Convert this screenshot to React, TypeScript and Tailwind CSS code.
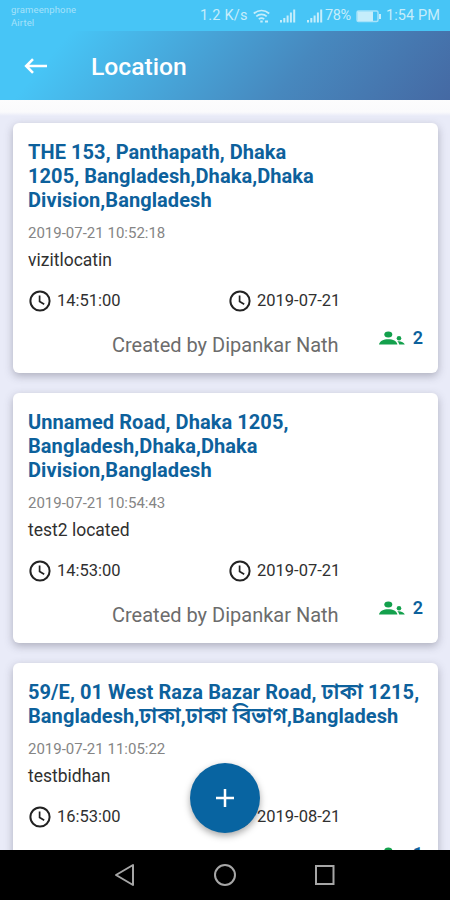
interface Place {
  id: number;
  address: string;
  createdAt: string;
  note: string;
  time: string;
  date: string;
  createdBy: string;
  members: number;
}

const PLACES: Place[] = [
  {
    id: 1,
    address: "THE 153, Panthapath, Dhaka\n1205, Bangladesh,Dhaka,Dhaka\nDivision,Bangladesh",
    createdAt: "2019-07-21 10:52:18",
    note: "vizitlocatin",
    time: "14:51:00",
    date: "2019-07-21",
    createdBy: "Dipankar Nath",
    members: 2,
  },
  {
    id: 2,
    address: "Unnamed Road, Dhaka 1205,\nBangladesh,Dhaka,Dhaka\nDivision,Bangladesh",
    createdAt: "2019-07-21 10:54:43",
    note: "test2 located",
    time: "14:53:00",
    date: "2019-07-21",
    createdBy: "Dipankar Nath",
    members: 2,
  },
  {
    id: 3,
    address: "59/E, 01 West Raza Bazar Road, ঢাকা 1215,\nBangladesh,ঢাকা,ঢাকা বিভাগ,Bangladesh",
    createdAt: "2019-07-21 11:05:22",
    note: "testbidhan",
    time: "16:53:00",
    date: "2019-08-21",
    createdBy: "Dipankar Nath",
    members: 1,
  },
];

function ClockIcon() {
  return (
    <svg viewBox="0 0 22 22" className="h-[22px] w-[22px] shrink-0" fill="none" stroke="#222" strokeWidth="2">
      <circle cx="11" cy="11" r="9.6" />
      <path d="M10.6 5.5v6l4.6 2.8" strokeWidth="1.7" />
    </svg>
  );
}

function PeopleIcon() {
  return (
    <svg viewBox="0 0 26 14" className="h-[14px] w-[26px]" fill="#13a04c">
      <ellipse cx="9.3" cy="3.4" rx="4" ry="3" />
      <path d="M0 13.5c.6-3.4 4.6-5.2 9.3-5.2s8.5 1.8 9.1 5.2z" />
      <circle cx="20" cy="7.2" r="2.3" />
      <path d="M18.4 10.2c3.4-.4 6.6.9 7.4 3.3h-5.6c-.2-1.3-.8-2.3-1.8-3.3z" />
    </svg>
  );
}

function SignalIcon() {
  return (
    <svg viewBox="0 0 16 14" className="h-[14px] w-4" fill="#c5edfb">
      <rect x="0" y="11" width="2" height="2.5" />
      <rect x="3.3" y="9" width="2" height="4.5" />
      <rect x="6.6" y="6.5" width="2" height="7" />
      <rect x="9.9" y="3.5" width="2" height="10" />
      <rect x="13.2" y="0.5" width="2" height="13" />
    </svg>
  );
}

function StatusBar() {
  return (
    <div className="flex h-[31px] bg-[#47c5f6] text-[#c5edfb]">
      <div className="w-[200px] pt-[3px] pl-[11px] text-[9.5px] leading-[13px] tracking-[0.15px] text-[#a5e2fa]">
        <div>grameenphone</div>
        <div>Airtel</div>
      </div>
      <div className="flex h-8 flex-1 items-center text-[14.5px] whitespace-nowrap">
        <span className="w-[53px] tracking-[0.2px]">1.2 K/s</span>
        <svg viewBox="0 0 17 14" className="mr-[10px] h-[14px] w-[17px]" fill="none" stroke="#c5edfb" strokeWidth="1.7">
          <path d="M.8 4.5c4.5-4 10.9-4 15.4 0M3.3 7.4c3-2.7 7.4-2.7 10.4 0M5.8 10.2c1.6-1.4 3.8-1.4 5.4 0" />
          <path d="M7.3 12.6h2.4M12 12.5h3" strokeWidth="2" />
        </svg>
        <SignalIcon />
        <span className="w-[11px]" />
        <SignalIcon />
        <span className="ml-0.5 w-[31px] tracking-[-0.4px]">78%</span>
        <svg viewBox="0 0 26 13" className="h-[13px] w-[26px]">
          <rect x="1" y="1" width="21" height="10.5" rx="1.5" fill="none" stroke="#a5e2fa" strokeWidth="1.5" />
          <rect x="1.5" y="1.5" width="15.5" height="9.5" fill="#c5edfb" />
          <rect x="23" y="4" width="2" height="5" fill="#c5edfb" />
        </svg>
        <span className="ml-1 tracking-[0.1px]">1:54 PM</span>
      </div>
    </div>
  );
}

// Bengali runs are set slightly larger than the Latin text around them
function Address({ text }: { text: string }) {
  return (
    <h2 className="text-[20px] leading-[23.8px] font-bold tracking-[0.07px] whitespace-pre text-[#0d619c]">
      {text.split(/([\u0980-\u09FF]+(?: [\u0980-\u09FF]+)*)/).map((part, i) =>
        i % 2 === 1 ? (
          <span key={i} className="text-[21.5px] leading-none font-semibold">
            {part}
          </span>
        ) : (
          part
        ),
      )}
    </h2>
  );
}

function PlaceCard({ place }: { place: Place }) {
  return (
    <article className="shrink-0 rounded-md bg-white px-[15.5px] pt-[18px] pb-[11.1px] shadow-[0_3px_8px_rgba(60,60,80,0.35)]">
      <Address text={place.address} />
      <p className="mt-[8.5px] text-[15px] leading-6 text-[#858585]">{place.createdAt}</p>
      <p className="mt-[2px] text-[17.5px] leading-[26px] text-[#303030]">{place.note}</p>
      <div className="mt-[17px] flex h-[22px] items-center text-[16.5px] text-[#303030]">
        <div className="flex w-[200px] items-center gap-[6px] pl-px">
          <ClockIcon />
          <span>{place.time}</span>
        </div>
        <div className="flex items-center gap-[6px] pl-px">
          <ClockIcon />
          <span>{place.date}</span>
        </div>
      </div>
      <div className="mt-[14px] flex h-[36px] items-start justify-between">
        <p className="w-full pt-[5px] pl-[84px] text-[20px] leading-7 whitespace-nowrap text-[#6c6c6c]">
          Created by {place.createdBy}
        </p>
        <div className="-mr-px flex h-6 items-center gap-2">
          <PeopleIcon />
          <span className="text-[18px] leading-6 font-semibold text-[#0d619c]">{place.members}</span>
        </div>
      </div>
    </article>
  );
}

export default function App() {
  return (
    <div className="relative flex h-[900px] w-[450px] flex-col overflow-hidden bg-[#e9ebf8] font-['Roboto','Noto_Sans_Bengali',sans-serif]">
      <StatusBar />
      <header className="flex h-[69px] shrink-0 items-center bg-[linear-gradient(130deg,#47c5f6_14%,#4788be_65%,#4569a3_100%)] pl-6">
        <svg viewBox="0 0 24 18" className="h-[18px] w-6" fill="none" stroke="white" strokeWidth="2.6">
          <path d="M23 9H2.500M9 2.200 2.200 9 9 15.800" />
        </svg>
        <h1 className="ml-[43px] pt-0.5 text-[24.7px] leading-8 font-medium text-white">Location</h1>
      </header>
      <main className="flex min-h-0 flex-1 flex-col gap-5 overflow-hidden bg-[linear-gradient(#fcfcfd_0px,#fafafc_12px,#e9ebf8_16px)] px-[12.5px] pt-[23px]">
        {PLACES.map((place) => (
          <PlaceCard key={place.id} place={place} />
        ))}
      </main>
      <button
        type="button"
        aria-label="Add location"
        className="absolute top-[763px] left-[190px] flex h-[70px] w-[70px] items-center justify-center rounded-full bg-[#0864a1] shadow-[0_3px_7px_rgba(0,0,0,0.35)]"
      >
        <svg viewBox="0 0 18 18" className="h-[18px] w-[18px]" stroke="white" strokeWidth="2.5">
          <path d="M9 0v18M0 9h18" />
        </svg>
      </button>
      <nav className="flex h-[50px] shrink-0 items-center justify-center gap-[77px] bg-black">
        <svg viewBox="0 0 22 24" className="h-6 w-[22px]" fill="none" stroke="#a6a6a6" strokeWidth="2">
          <path d="M19 2v20L2 12z" strokeLinejoin="round" />
        </svg>
        <svg viewBox="0 0 24 24" className="h-6 w-6" fill="none" stroke="#a6a6a6" strokeWidth="2">
          <circle cx="12" cy="12" r="10" />
        </svg>
        <svg viewBox="0 0 22 22" className="h-[22px] w-[22px]" fill="none" stroke="#a6a6a6" strokeWidth="2">
          <rect x="2" y="2" width="17.5" height="18" />
        </svg>
      </nav>
    </div>
  );
}
